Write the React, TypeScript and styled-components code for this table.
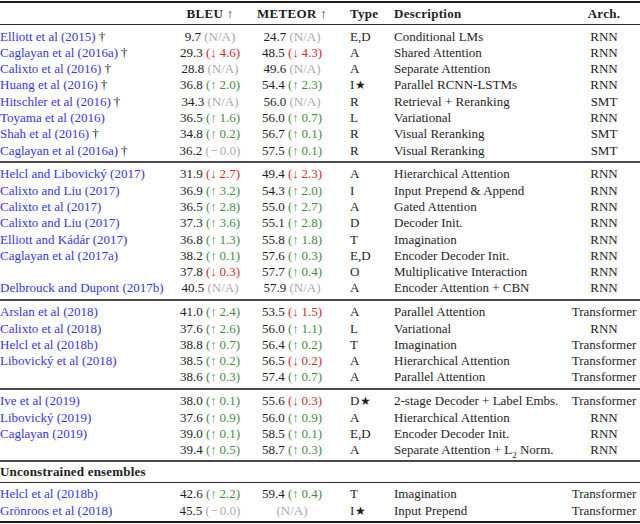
import React from 'react';
import styled, {createGlobalStyle} from 'styled-components';

const Global = createGlobalStyle`
  body{
    margin:0;
    background:#fff;
    font-family:"Liberation Serif","DejaVu Serif",serif;
    color:#1e1e1e;
  }
`

type Delta = {kind: 'up' | 'down' | 'na' | 'zero', v?: string}
type Score = {value: string, delta: Delta}
type Row = {
    name?: string
    dagger?: boolean
    bleu: Score
    meteor: Score
    type: string
    star?: boolean
    desc: React.ReactNode
    arch: string
}

const up = (v: string): Delta => ({kind: 'up', v})
const down = (v: string): Delta => ({kind: 'down', v})
const na: Delta = {kind: 'na'}
const zero: Delta = {kind: 'zero'}
const s = (value: string, delta: Delta): Score => ({value, delta})

const groups: Row[][] = [
    [
        {name: 'Elliott et al (2015)', dagger: true, bleu: s('9.7', na), meteor: s('24.7', na), type: 'E,D', desc: 'Conditional LMs', arch: 'RNN'},
        {name: 'Caglayan et al (2016a)', dagger: true, bleu: s('29.3', down('4.6')), meteor: s('48.5', down('4.3')), type: 'A', desc: 'Shared Attention', arch: 'RNN'},
        {name: 'Calixto et al (2016)', dagger: true, bleu: s('28.8', na), meteor: s('49.6', na), type: 'A', desc: 'Separate Attention', arch: 'RNN'},
        {name: 'Huang et al (2016)', dagger: true, bleu: s('36.8', up('2.0')), meteor: s('54.4', up('2.3')), type: 'I', star: true, desc: 'Parallel RCNN-LSTMs', arch: 'RNN'},
        {name: 'Hitschler et al (2016)', dagger: true, bleu: s('34.3', na), meteor: s('56.0', na), type: 'R', desc: 'Retrieval + Reranking', arch: 'SMT'},
        {name: 'Toyama et al (2016)', bleu: s('36.5', up('1.6')), meteor: s('56.0', up('0.7')), type: 'L', desc: 'Variational', arch: 'RNN'},
        {name: 'Shah et al (2016)', dagger: true, bleu: s('34.8', up('0.2')), meteor: s('56.7', up('0.1')), type: 'R', desc: 'Visual Reranking', arch: 'SMT'},
        {name: 'Caglayan et al (2016a)', dagger: true, bleu: s('36.2', zero), meteor: s('57.5', up('0.1')), type: 'R', desc: 'Visual Reranking', arch: 'SMT'},
    ],
    [
        {name: 'Helcl and Libovický (2017)', bleu: s('31.9', down('2.7')), meteor: s('49.4', down('2.3')), type: 'A', desc: 'Hierarchical Attention', arch: 'RNN'},
        {name: 'Calixto and Liu (2017)', bleu: s('36.9', up('3.2')), meteor: s('54.3', up('2.0')), type: 'I', desc: 'Input Prepend & Append', arch: 'RNN'},
        {name: 'Calixto et al (2017)', bleu: s('36.5', up('2.8')), meteor: s('55.0', up('2.7')), type: 'A', desc: 'Gated Attention', arch: 'RNN'},
        {name: 'Calixto and Liu (2017)', bleu: s('37.3', up('3.6')), meteor: s('55.1', up('2.8')), type: 'D', desc: 'Decoder Init.', arch: 'RNN'},
        {name: 'Elliott and Kádár (2017)', bleu: s('36.8', up('1.3')), meteor: s('55.8', up('1.8')), type: 'T', desc: 'Imagination', arch: 'RNN'},
        {name: 'Caglayan et al (2017a)', bleu: s('38.2', up('0.1')), meteor: s('57.6', up('0.3')), type: 'E,D', desc: 'Encoder Decoder Init.', arch: 'RNN'},
        {bleu: s('37.8', down('0.3')), meteor: s('57.7', up('0.4')), type: 'O', desc: 'Multiplicative Interaction', arch: 'RNN'},
        {name: 'Delbrouck and Dupont (2017b)', bleu: s('40.5', na), meteor: s('57.9', na), type: 'A', desc: 'Encoder Attention + CBN', arch: 'RNN'},
    ],
    [
        {name: 'Arslan et al (2018)', bleu: s('41.0', up('2.4')), meteor: s('53.5', down('1.5')), type: 'A', desc: 'Parallel Attention', arch: 'Transformer'},
        {name: 'Calixto et al (2018)', bleu: s('37.6', up('2.6')), meteor: s('56.0', up('1.1')), type: 'L', desc: 'Variational', arch: 'RNN'},
        {name: 'Helcl et al (2018b)', bleu: s('38.8', up('0.7')), meteor: s('56.4', up('0.2')), type: 'T', desc: 'Imagination', arch: 'Transformer'},
        {name: 'Libovický et al (2018)', bleu: s('38.5', up('0.2')), meteor: s('56.5', down('0.2')), type: 'A', desc: 'Hierarchical Attention', arch: 'Transformer'},
        {bleu: s('38.6', up('0.3')), meteor: s('57.4', up('0.7')), type: 'A', desc: 'Parallel Attention', arch: 'Transformer'},
    ],
    [
        {name: 'Ive et al (2019)', bleu: s('38.0', up('0.1')), meteor: s('55.6', down('0.3')), type: 'D', star: true, desc: '2-stage Decoder + Label Embs.', arch: 'Transformer'},
        {name: 'Libovický (2019)', bleu: s('37.6', up('0.9')), meteor: s('56.0', up('0.9')), type: 'A', desc: 'Hierarchical Attention', arch: 'RNN'},
        {name: 'Caglayan (2019)', bleu: s('39.0', up('0.1')), meteor: s('58.5', up('0.1')), type: 'E,D', desc: 'Encoder Decoder Init.', arch: 'RNN'},
        {bleu: s('39.4', up('0.5')), meteor: s('58.7', up('0.3')), type: 'A', desc: <>Separate Attention + L<sub>2</sub> Norm.</>, arch: 'RNN'},
    ],
]

const ensembles: Row[] = [
    {name: 'Helcl et al (2018b)', bleu: s('42.6', up('2.2')), meteor: s('59.4', up('0.4')), type: 'T', desc: 'Imagination', arch: 'Transformer'},
    {name: 'Grönroos et al (2018)', bleu: s('45.5', zero), meteor: s('', na), type: 'I', star: true, desc: 'Input Prepend', arch: 'Transformer'},
]

const DeltaText = ({d}: {d: Delta}) => {
    if (d.kind === 'na') return <Change $tone="gray">(N/A)</Change>
    if (d.kind === 'zero') return <Change $tone="gray">(−&#8201;0.0)</Change>
    if (d.kind === 'up') return <Change $tone="green">(↑&#8201;{d.v})</Change>
    return <Change $tone="red">(↓&#8201;{d.v})</Change>
}

const ScoreCell = ({sc}: {sc: Score}) => (
    <Center>
        {sc.value && <span>{sc.value}&nbsp;</span>}
        <DeltaText d={sc.delta}/>
    </Center>
)

const TableRow = ({r}: {r: Row}) => (
    <Line>
        <Name>
            {r.name}
            {r.dagger && <Dagger>†</Dagger>}
        </Name>
        <ScoreCell sc={r.bleu}/>
        <ScoreCell sc={r.meteor}/>
        <TypeCell>{r.type}{r.star && <Star>★</Star>}</TypeCell>
        <Desc>{r.desc}</Desc>
        <Center>{r.arch}</Center>
    </Line>
)

export default function App() {
    return (
        <>
            <Global/>
            <Table>
                <Header>
                    <span/>
                    <Center>BLEU <Arrow>↑</Arrow></Center>
                    <Center>METEOR <Arrow>↑</Arrow></Center>
                    <TypeCell>Type</TypeCell>
                    <Desc>Description</Desc>
                    <Center>Arch.</Center>
                </Header>
                {groups.map((g, i) => (
                    <Group key={i} $rule={i === 0 ? 'thin' : 'mid'}>
                        {g.map((r, j) => <TableRow key={j} r={r}/>)}
                    </Group>
                ))}
                <Group $rule="mid" $tight>
                    <Section>Unconstrained ensembles</Section>
                </Group>
                <Group $rule="thin" $last>
                    {ensembles.map((r, j) => <TableRow key={j} r={r}/>)}
                </Group>
            </Table>
        </>
    )
}

const cols = '176px 68px 96px 49px 179px 72px'

const Table = styled.div`
  width:640px;
  box-sizing:border-box;
  border-top:2px solid #1a1a1a;
  margin-top:1px;
  font-size:13px;
`

const Header = styled.div`
  display:grid;
  grid-template-columns:${cols};
  align-items:center;
  height:21px;
  font-weight:bold;
  letter-spacing:0.3px;
`

const Group = styled.div<{$rule: 'thin' | 'mid', $last?: boolean, $tight?: boolean}>`
  border-top:${p => p.$rule === 'thin' ? '1px solid #2a2a2a' : '2px solid #4a4a4a'};
  padding:${p => p.$tight ? '2px 0 1px' : '3.5px 0 2px'};
  ${p => p.$last && 'border-bottom:2px solid #1a1a1a;'}
`

const Line = styled.div`
  display:grid;
  grid-template-columns:${cols};
  height:16.3px;
  line-height:16.3px;
  white-space:nowrap;
`

const Section = styled.div`
  height:16.3px;
  line-height:16.3px;
  font-weight:bold;
  letter-spacing:0.2px;
`

const Name = styled.div`
  color:#3434f4;
  overflow:visible;
`

const Dagger = styled.span`
  color:#1e1e1e;
  margin-left:3px;
`

const Center = styled.div`
  text-align:center;
`

const Arrow = styled.span`
  font-weight:normal;
`

const Change = styled.span<{$tone: 'gray' | 'green' | 'red'}>`
  color:${p => p.$tone === 'gray' ? '#aaaaaa' : p.$tone === 'green' ? '#3f8f3f' : '#d22c2c'};
`

const TypeCell = styled.div`
  padding-left:10px;
`

const Star = styled.span`
  font-size:12px;
  margin-left:1px;
`

const Desc = styled.div`
  padding-left:5px;
  sub{
    font-size:9px;
    line-height:0;
  }
`
